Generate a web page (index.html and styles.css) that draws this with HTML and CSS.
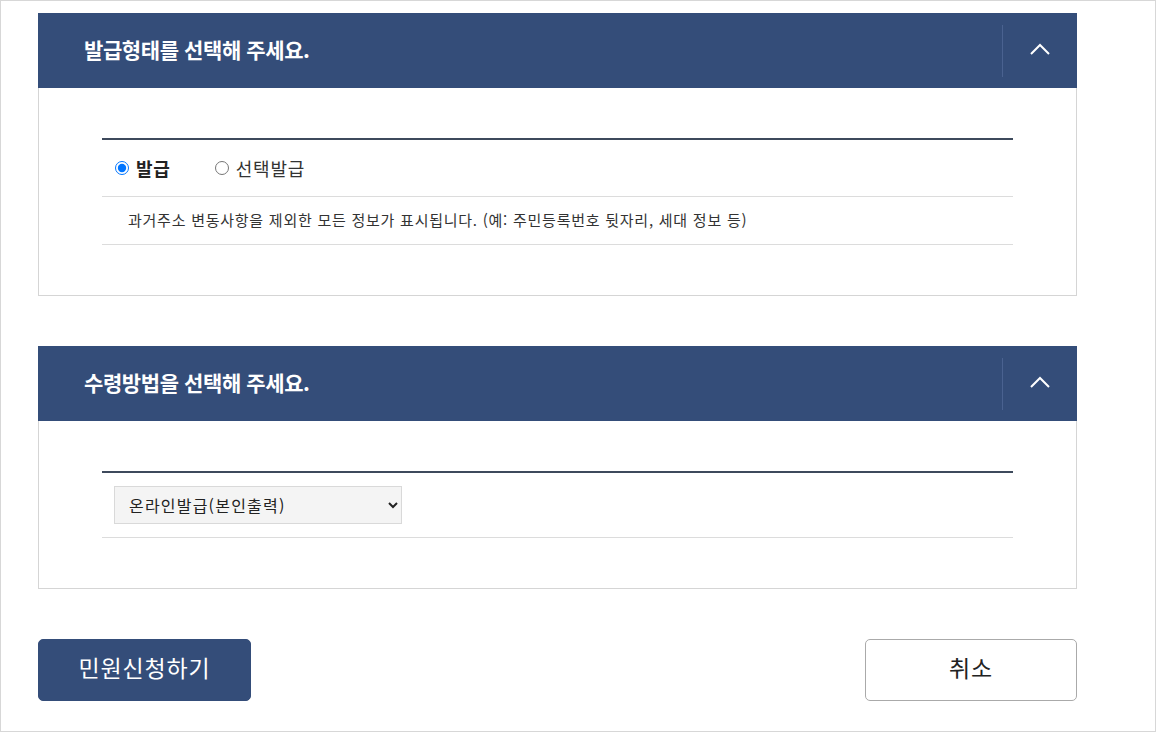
FILE: index.html
```html
<!DOCTYPE html>
<html lang="ko">
<head>
    <meta charset="UTF-8">
    <meta name="viewport" content="width=device-width, initial-scale=1.0">
    <title>민원신청</title>
    <link rel="stylesheet" href="styles.css">
</head>
<body>
    <div class="page">
        <section class="panel">
            <div class="panel-head">
                <h2>발급형태를 선택해 주세요.</h2>
                <button class="toggle" type="button" aria-label="접기">
                    <svg width="20" height="12" viewBox="0 0 20 12"><path d="M1 11 L10 2 L19 11" fill="none" stroke="#fff" stroke-width="2"/></svg>
                </button>
            </div>
            <div class="panel-body">
                <div class="box">
                    <div class="row radios">
                        <label class="radio checked"><input type="radio" name="kind" checked> 발급</label>
                        <label class="radio"><input type="radio" name="kind"> 선택발급</label>
                    </div>
                    <div class="row note">
                        과거주소 변동사항을 제외한 모든 정보가 표시됩니다. (예: 주민등록번호 뒷자리, 세대 정보 등)
                    </div>
                </div>
            </div>
        </section>

        <section class="panel">
            <div class="panel-head">
                <h2>수령방법을 선택해 주세요.</h2>
                <button class="toggle" type="button" aria-label="접기">
                    <svg width="20" height="12" viewBox="0 0 20 12"><path d="M1 11 L10 2 L19 11" fill="none" stroke="#fff" stroke-width="2"/></svg>
                </button>
            </div>
            <div class="panel-body">
                <div class="box">
                    <div class="row select-row">
                        <select class="receive">
                            <option>온라인발급(본인출력)</option>
                        </select>
                    </div>
                </div>
            </div>
        </section>

        <div class="actions">
            <button class="btn primary" type="button">민원신청하기</button>
            <button class="btn" type="button">취소</button>
        </div>
    </div>
</body>
</html>
```

FILE: styles.css
```css
html, body {
    margin: 0;
    padding: 0;
}

body {
    font-family: "Noto Sans CJK KR", "Noto Sans", sans-serif;
    color: #333;
    background: #fff;
}

.page {
    box-sizing: border-box;
    width: 1156px;
    height: 732px;
    border: 1px solid #d7d7d7;
    padding: 12px 0 0 37px;
}

.panel {
    width: 1039px;
    margin-bottom: 50px;
}

.panel-head {
    display: flex;
    align-items: center;
    justify-content: space-between;
    height: 75px;
    background-color: #344d79;
    padding-left: 46px;
    box-sizing: border-box;
}

.panel-head h2 {
    margin: 0 0 4px 0;
    color: #fff;
    font-size: 21px;
    font-weight: 700;
    letter-spacing: -0.4px;
}

.toggle {
    width: 74px;
    height: 52px;
    margin-right: 1px;
    border: none;
    border-left: 1px solid #4a6290;
    background: none;
    display: flex;
    align-items: center;
    justify-content: center;
    padding: 0 0 4px 0;
    cursor: pointer;
}

.panel-body {
    border: 1px solid #d5d5d5;
    border-top: none;
    padding: 50px 63px 50px 63px;
}

.box {
    border-top: 2px solid #3e4a5c;
}

.row {
    border-bottom: 1px solid #dcdcdc;
}

.radios {
    display: flex;
    align-items: center;
    height: 56px;
    padding-left: 13px;
    gap: 44px;
}

.radio {
    display: flex;
    align-items: center;
    gap: 7px;
    font-size: 18px;
    letter-spacing: 0.8px;
    color: #333;
}

.radio.checked {
    font-weight: 700;
    color: #222;
}

.radio input {
    margin: 0;
    width: 14px;
    height: 14px;
}

.note {
    height: 48px;
    display: flex;
    align-items: center;
    padding: 0 0 2px 26px;
    box-sizing: border-box;
    font-size: 15px;
    color: #333;
    letter-spacing: 0.75px;
}

.select-row {
    padding: 13px 12px 13px;
}

.receive {
    width: 288px;
    height: 38px;
    background: #f4f4f4;
    border: 1px solid #d9d9d9;
    border-radius: 0;
    font-family: inherit;
    font-size: 16px;
    letter-spacing: 1.2px;
    color: #222;
    padding: 0 10px;
}

.actions {
    width: 1039px;
    display: flex;
    justify-content: space-between;
}

.btn {
    width: 212px;
    height: 62px;
    border: 1px solid #aaa;
    border-radius: 5px;
    background: #fff;
    color: #222;
    font-family: inherit;
    font-size: 23px;
    letter-spacing: 0.8px;
    padding: 0 0 6px 0;
    cursor: pointer;
}

.btn.primary {
    width: 213px;
    background-color: #344d79;
    border-color: #344d79;
    color: #fff;
}
```
